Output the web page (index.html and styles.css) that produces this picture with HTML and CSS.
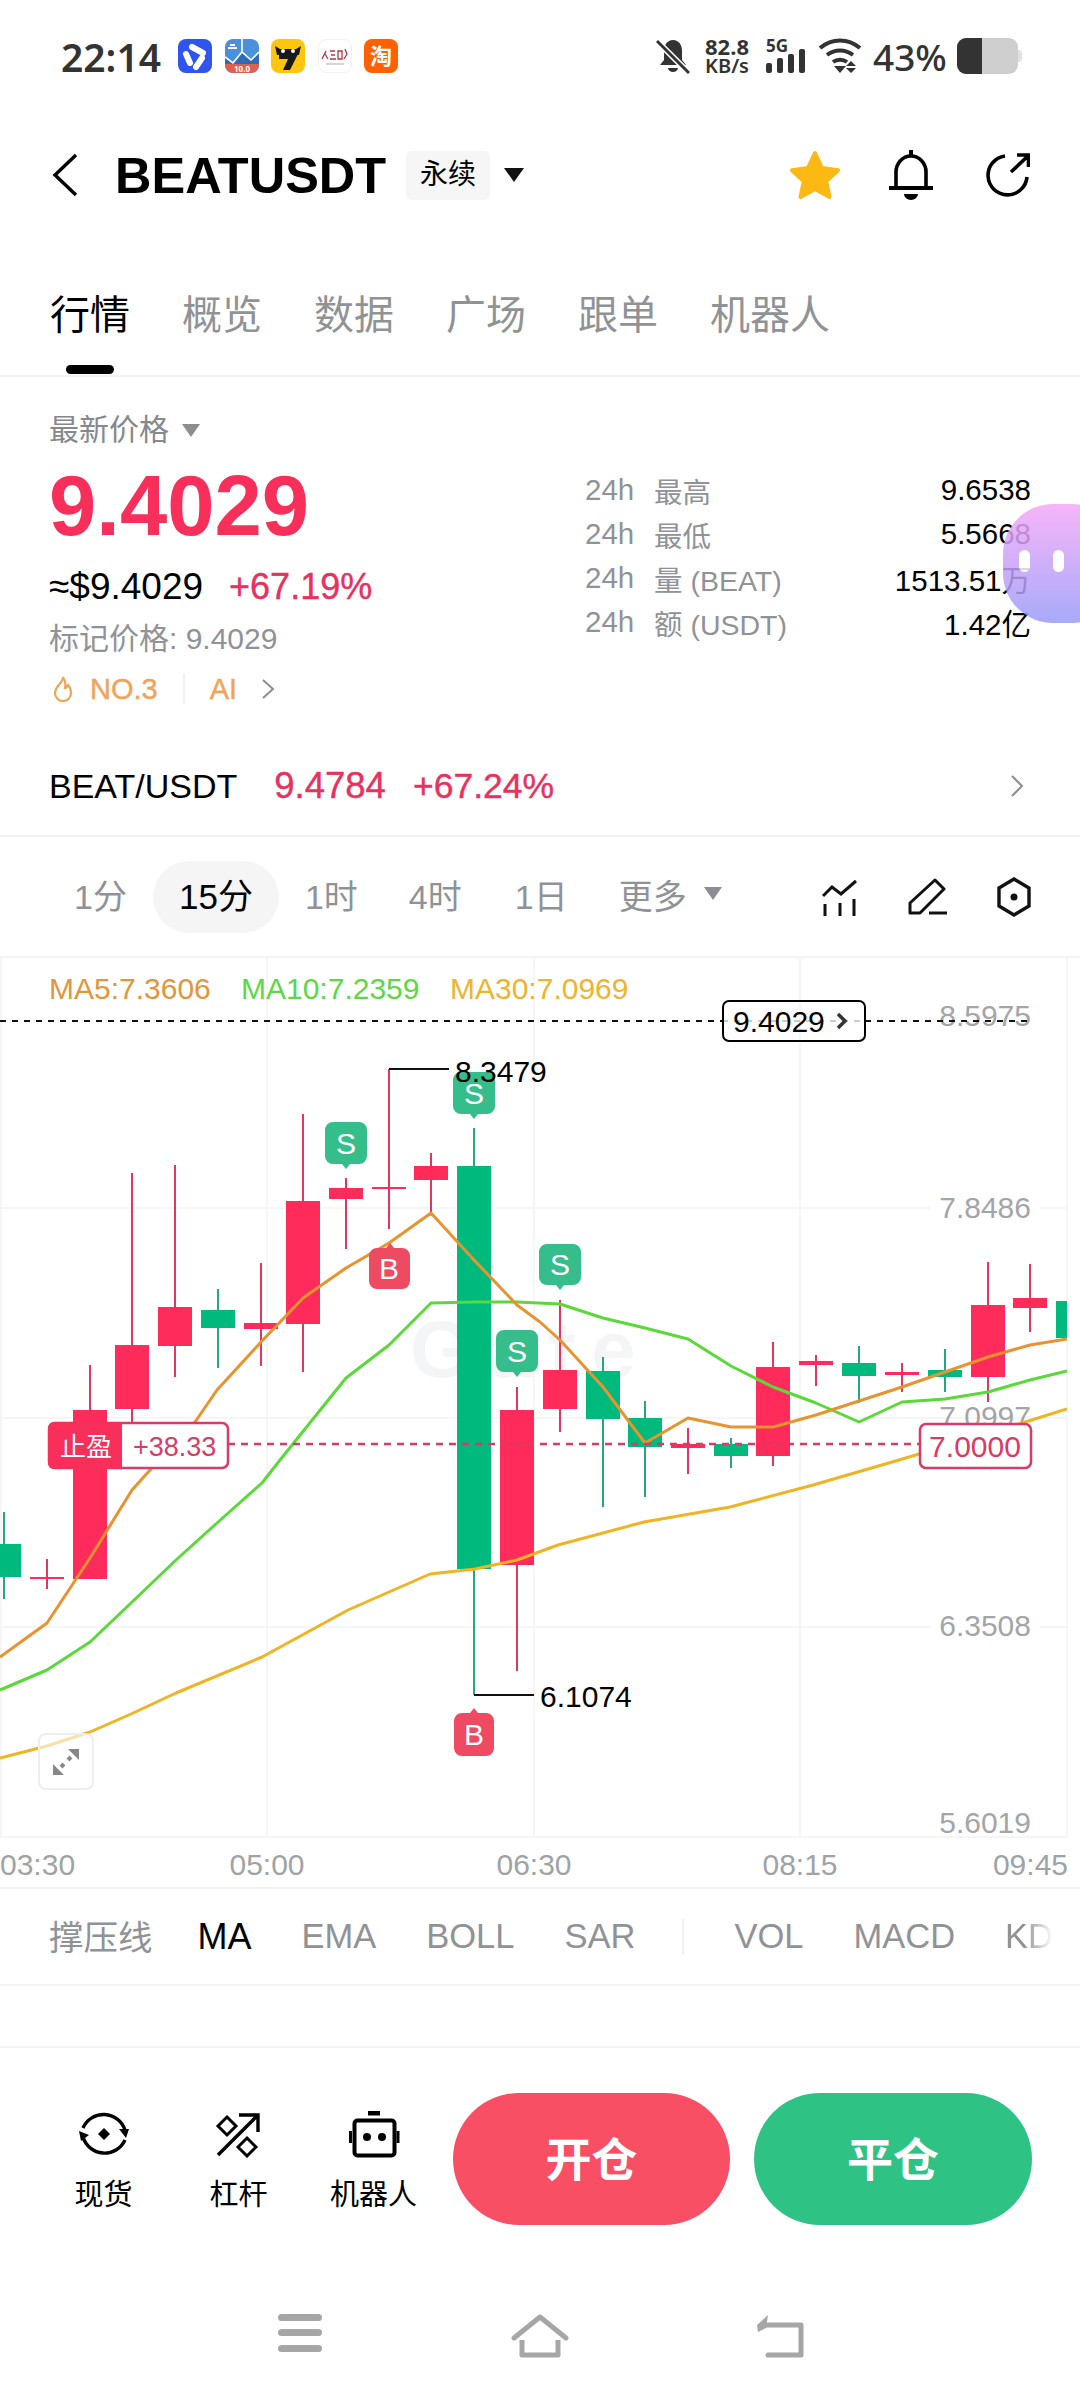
FILE: index.html
```html
<!DOCTYPE html>
<html lang="zh">
<head>
  <meta charset="UTF-8" />
  <meta name="viewport" content="width=device-width, initial-scale=1.0"/>
  <title>BEATUSDT</title>
  <link rel="stylesheet" href="styles.css">
</head>
<body>
<div class="page">

  <!-- status bar -->
  <div class="status">
    <span class="clock">22:14</span>
    <div class="apps">
      <svg class="app" viewBox="0 0 34 34"><rect width="34" height="34" rx="8" fill="#2f54f0"/><path d="M14 8l11 6M8 15l4 9M24 19l-6 9" fill="none" stroke="#fff" stroke-width="6" stroke-linecap="round"/></svg>
      <svg class="app" viewBox="0 0 34 34"><rect width="34" height="34" rx="8" fill="#4a90dc"/><path d="M0 19l8 6 9-11 9 8 8-8v12H0z" fill="#2f6cb8"/><path d="M0 18l8 6 9-11 9 8 8-8M17 0v13" fill="none" stroke="#fff" stroke-width="1.600"/><path d="M3 9h9M5 6h5" stroke="#fff" stroke-width="1.800"/><path d="M0 25h34v1a8 8 0 0 1-8 8H8a8 8 0 0 1-8-8z" fill="#e0604f"/><text x="17" y="32.500" class="app-num">10.0</text></svg>
      <svg class="app" viewBox="0 0 34 34"><rect width="34" height="34" rx="8" fill="#fdc60d"/><path d="M4 7l5 3h16l5-3-2 9H6z" fill="#1a1a1a"/><path d="M8 15h19l-8 16h-7l5-11H8z" fill="#1a1a1a"/><circle cx="12" cy="12" r="2" fill="#fff"/><circle cx="22" cy="12" r="2" fill="#fff"/></svg>
      <svg class="app" viewBox="0 0 34 34"><rect x=".5" y=".5" width="33" height="33" rx="8" fill="#fff" stroke="#f0f0f0"/><path d="M4 20l4-8M7 15l3 5M12 12h5M13 16h4M12 20h6M20 12h4v8h-4zM27 10l2 5-3 5" stroke="#b8344a" stroke-width="1.300" fill="none"/><path d="M8 25h18" stroke="#aaa" stroke-width="1"/></svg>
      <svg class="app" viewBox="0 0 34 34"><rect width="34" height="34" rx="8" fill="#ff6000"/><text x="17" y="25" class="app-tao">淘</text></svg>
    </div>
    <div class="sys">
      <svg class="sys-bell" viewBox="0 0 34 36"><path d="M17 2c-6 0-9 5-9 11v9l-4 5h26l-4-5v-9c0-6-3-11-9-11z" fill="#333"/><path d="M12 30a5 4 0 0 0 10 0z" fill="#333"/><path d="M1 3l32 32" stroke="#fff" stroke-width="6"/><path d="M1 3l32 32" stroke="#333" stroke-width="3"/></svg>
      <div class="speed"><span>82.8</span><span class="speed-unit">KB/s</span></div>
      <div class="net">
        <span>5G</span>
        <svg class="bars" viewBox="0 0 40 24"><rect x="0" y="14" width="6" height="10" rx="2"/><rect x="11" y="9" width="6" height="15" rx="2"/><rect x="22" y="5" width="6" height="19" rx="2"/><rect x="33" y="0" width="6" height="24" rx="2"/></svg>
      </div>
      <svg class="wifi" viewBox="0 0 44 36"><path d="M2 10c12-10 28-10 40 0M9 17c8-6 18-6 26 0M15 24c4-3 10-3 14 0" fill="none" stroke="#333" stroke-width="4"/><path d="M16 28h12l-6 7zM33 23l5 5H28z M28 30h10l-5 5z" fill="#333"/></svg>
      <span class="pct">43%</span>
      <div class="battery"><div class="battery-fill"></div></div>
    </div>
  </div>

  <!-- title bar -->
  <div class="titlebar">
    <svg class="back" viewBox="0 0 26 44"><path d="M24 2L3 22l21 20" fill="none" stroke="#000" stroke-width="3.400"/></svg>
    <h1>BEATUSDT</h1>
    <span class="tag">永续</span>
    <span class="tri tri-black"></span>
    <div class="title-actions">
      <svg class="star" viewBox="0 0 52 50"><path d="M26 3l7 15 16 2.200-11.800 11.200L40.500 47 26 39 11.500 47l3.300-15.600L3 20.200 19 18z" fill="#fdb913" stroke="#fdb913" stroke-width="4" stroke-linejoin="round"/></svg>
      <svg class="bell" viewBox="0 0 46 50"><path d="M8 38V22a15 16 0 0 1 30 0v16" fill="none" stroke="#000" stroke-width="3.600"/><path d="M23 0v6" stroke="#000" stroke-width="4"/><path d="M1 38h44" stroke="#000" stroke-width="4"/><path d="M16 44h14a7 6 0 0 1-14 0z" fill="#000"/></svg>
      <svg class="share" viewBox="0 0 44 44"><path d="M19 3A19.500 19.500 0 1 0 41 24" fill="none" stroke="#000" stroke-width="3.600"/><path d="M25 19L42 3M31 2h11.500v12" fill="none" stroke="#000" stroke-width="3.600"/></svg>
    </div>
  </div>

  <!-- tabs -->
  <div class="tabs">
    <span class="tab tab-on">行情</span>
    <span class="tab">概览</span>
    <span class="tab">数据</span>
    <span class="tab">广场</span>
    <span class="tab">跟单</span>
    <span class="tab">机器人</span>
    <i class="tab-mark"></i>
  </div>

  <!-- price block -->
  <div class="info">
    <div class="info-left">
      <div class="latest">最新价格 <span class="tri tri-grey"></span></div>
      <div class="price">9.4029</div>
      <div class="approx"><span>≈$9.4029</span><span class="up">+67.19%</span></div>
      <div class="mark">标记价格: 9.4029</div>
      <div class="hot">
        <svg class="fire" viewBox="0 0 22 26"><path d="M11 1c1 5-8 9-8 16a8 8 0 0 0 16 0c0-3-1-6-3-8-1 2-2 3-3 3 1-4 0-8-2-11z" fill="none" stroke="#f1a35a" stroke-width="2.200"/></svg>
        <span>NO.3</span>
        <i class="hot-sep"></i>
        <span>AI</span>
        <svg class="hot-arrow" viewBox="0 0 14 22"><path d="M2 2l10 9-10 9" fill="none" stroke="#8a8d91" stroke-width="2"/></svg>
      </div>
    </div>
    <div class="stats">
      <div class="stat"><span class="stat-h">24h</span><span class="stat-k">最高</span><b>9.6538</b></div>
      <div class="stat"><span class="stat-h">24h</span><span class="stat-k">最低</span><b>5.5668</b></div>
      <div class="stat"><span class="stat-h">24h</span><span class="stat-k">量 (BEAT)</span><b>1513.51万</b></div>
      <div class="stat"><span class="stat-h">24h</span><span class="stat-k">额 (USDT)</span><b>1.42亿</b></div>
    </div>
    <div class="ball"><i></i><i></i></div>
  </div>

  <div class="spot">
    <span>BEAT/USDT</span>
    <span class="spot-price">9.4784</span>
    <span class="spot-pct">+67.24%</span>
    <svg class="spot-arrow" viewBox="0 0 14 22"><path d="M2 1l10 10L2 21" fill="none" stroke="#8a8d91" stroke-width="2"/></svg>
  </div>

  <!-- interval row -->
  <div class="intervals">
    <span class="iv iv-1">1分</span>
    <span class="iv iv-on">15分</span>
    <span class="iv iv-2">1时</span>
    <span class="iv iv-3">4时</span>
    <span class="iv iv-4">1日</span>
    <span class="iv iv-5">更多</span>
    <span class="tri tri-grey"></span>
    <div class="tools">
      <svg class="tool-candle" viewBox="0 0 36 38"><path d="M1 18l9-9 9 7L34 3" fill="none" stroke="#111" stroke-width="3"/><path d="M3 26v12M18 25v13M32 21v17" stroke="#111" stroke-width="3"/></svg>
      <svg class="tool-pen" viewBox="0 0 40 38"><path d="M2 35V25L27 2l9 9-24 24z" fill="none" stroke="#111" stroke-width="3" stroke-linejoin="round"/><path d="M21 35h18" stroke="#111" stroke-width="3"/></svg>
      <svg class="tool-hex" viewBox="0 0 36 40"><path d="M18 2l15 9v18l-15 9-15-9V11z" fill="none" stroke="#111" stroke-width="3.400"/><circle cx="18" cy="20" r="3.500" fill="#111"/></svg>
    </div>
  </div>

  <!-- chart, coordinates are page pixels -->
  <div class="chart">
    <svg class="chart-svg" viewBox="0 958 1080 929">
      <defs><clipPath id="plot"><rect x="0" y="958" width="1067" height="880"/></clipPath></defs>

      <g class="grid">
        <path d="M0 1208H930M1040 1208H1067M0 1418H1067M0 1627H930M1040 1627H1067M0 1837H1067"/>
        <path d="M267 958V1837M534 958V1837M800 958V1837M1067 958V1837M1 958V1837"/>
      </g>

      <text x="410" y="1377" class="watermark">Gate</text>

      <text x="49" y="999" class="legend ma5">MA5:7.3606</text>
      <text x="241" y="999" class="legend ma10">MA10:7.2359</text>
      <text x="450" y="999" class="legend ma30">MA30:7.0969</text>

      <text x="1031" y="1026" class="axis">8.5975</text>
      <text x="1031" y="1218" class="axis">7.8486</text>
      <text x="1031" y="1427" class="axis">7.0997</text>
      <text x="1031" y="1636" class="axis">6.3508</text>
      <text x="1031" y="1833" class="axis">5.6019</text>

      <text x="0" y="1875" class="time">03:30</text>
      <text x="267" y="1875" class="time time-mid">05:00</text>
      <text x="534" y="1875" class="time time-mid">06:30</text>
      <text x="800" y="1875" class="time time-mid">08:15</text>
      <text x="1068" y="1875" class="time time-end">09:45</text>

      <g clip-path="url(#plot)">
        <g class="wick-g">
          <path d="M4 1512V1599M218 1289V1368M474 1128V1695M603 1357V1507M645 1401V1497M731 1438V1468M859 1346V1403M945 1349V1392"/>
        </g>
        <g class="wick-r">
          <path d="M47 1559V1589M90 1365V1410M132 1173V1425M175 1165V1377M261 1263V1366M303 1114V1372M346 1178V1249M389 1069V1229M431 1153V1213M517 1387V1671M560 1300V1432M688 1428V1474M773 1342V1466M816 1355V1386M902 1363V1392M988 1262V1402M1030 1264V1332"/>
        </g>
        <g class="body-g">
          <rect x="-13" y="1544" width="34" height="33"/>
          <rect x="201" y="1310" width="34" height="18"/>
          <rect x="457" y="1166" width="34" height="403"/>
          <rect x="586" y="1371" width="34" height="48"/>
          <rect x="628" y="1418" width="34" height="29"/>
          <rect x="714" y="1444" width="34" height="12"/>
          <rect x="842" y="1363" width="34" height="13"/>
          <rect x="928" y="1370" width="34" height="7"/>
          <rect x="1056" y="1301" width="34" height="37"/>
        </g>
        <g class="body-r">
          <rect x="30" y="1577" width="34" height="2"/>
          <rect x="73" y="1410" width="34" height="169"/>
          <rect x="115" y="1345" width="34" height="64"/>
          <rect x="158" y="1307" width="34" height="39"/>
          <rect x="244" y="1323" width="34" height="6"/>
          <rect x="286" y="1201" width="34" height="123"/>
          <rect x="329" y="1188" width="34" height="11"/>
          <rect x="372" y="1187" width="34" height="2"/>
          <rect x="414" y="1166" width="34" height="14"/>
          <rect x="500" y="1410" width="34" height="155"/>
          <rect x="543" y="1370" width="34" height="39"/>
          <rect x="671" y="1444" width="34" height="4"/>
          <rect x="756" y="1367" width="34" height="89"/>
          <rect x="799" y="1361" width="34" height="4"/>
          <rect x="885" y="1372" width="34" height="3"/>
          <rect x="971" y="1305" width="34" height="72"/>
          <rect x="1013" y="1298" width="34" height="10"/>
        </g>
        <polyline class="line ma30-line" points="0,1758 47,1746 90,1732 131,1714 176,1693 262,1657 348,1610 430,1574 475,1569 517,1560 558,1545 644,1522 730,1507 813,1485 899,1460 1022,1423 1067,1409"/>
        <polyline class="line ma10-line" points="0,1690 47,1670 90,1642 131,1603 176,1560 217,1523 262,1483 280,1460 346,1378 389,1345 431,1303 474,1302 517,1302 560,1304 603,1318 645,1328 688,1339 731,1366 773,1387 816,1403 859,1422 902,1402 945,1399 988,1392 1030,1380 1067,1371"/>
        <polyline class="line ma5-line" points="0,1657 47,1623 90,1558 132,1490 150,1470 175,1440 195,1422 217,1390 261,1342 303,1298 346,1268 389,1243 431,1213 474,1260 517,1305 540,1322 560,1340 603,1387 645,1443 688,1418 731,1427 773,1427 816,1415 859,1401 902,1387 945,1372 988,1357 1030,1345 1067,1339"/>
      </g>

      <!-- last price line -->
      <path class="dash-black" d="M0 1021H722M865 1021H1029"/>
      <path class="dash-pale" d="M722 1021H865"/>
      <rect x="723" y="1001" width="142" height="40" rx="6" class="price-tag"/>
      <text x="733" y="1032" class="tag-text">9.4029</text>
      <path d="M838 1014l7 7-7 7" class="tag-arrow"/>

      <!-- take profit line -->
      <path class="dash-red" d="M228 1444H919"/>
      <rect x="49" y="1423" width="179" height="45" rx="6" class="tp-box"/>
      <path d="M54 1422h68v47H54a6 6 0 0 1-6-6v-35a6 6 0 0 1 6-6z" class="tp-fill"/>
      <text x="86" y="1456" class="tp-label">止盈</text>
      <text x="133" y="1456" class="tp-num">+38.33</text>
      <rect x="920" y="1424" width="111" height="44" rx="6" class="tp-box"/>
      <text x="975" y="1457" class="tp-price">7.0000</text>

      <!-- trade marks -->
      <g class="mark-s">
        <path d="M333 1122h26a8 8 0 0 1 8 8v26a8 8 0 0 1-8 8h-9l-4 5-4-5h-9a8 8 0 0 1-8-8v-26a8 8 0 0 1 8-8z"/>
        <path d="M461 1072h26a8 8 0 0 1 8 8v26a8 8 0 0 1-8 8h-9l-4 5-4-5h-9a8 8 0 0 1-8-8v-26a8 8 0 0 1 8-8z"/>
        <path d="M504 1330h26a8 8 0 0 1 8 8v26a8 8 0 0 1-8 8h-9l-4 5-4-5h-9a8 8 0 0 1-8-8v-26a8 8 0 0 1 8-8z"/>
        <path d="M547 1244h26a8 8 0 0 1 8 8v25a8 8 0 0 1-8 8h-9l-4 5-4-5h-9a8 8 0 0 1-8-8v-25a8 8 0 0 1 8-8z"/>
      </g>
      <g class="mark-b">
        <path d="M377 1248h9l4-5 4 5h8a8 8 0 0 1 8 8v25a8 8 0 0 1-8 8h-25a8 8 0 0 1-8-8v-25a8 8 0 0 1 8-8z"/>
        <path d="M462 1713h8l4-5 4 5h8a8 8 0 0 1 8 8v27a8 8 0 0 1-8 8h-24a8 8 0 0 1-8-8v-27a8 8 0 0 1 8-8z"/>
      </g>
      <g class="mark-text">
        <text x="346" y="1154">S</text>
        <text x="474" y="1104">S</text>
        <text x="517" y="1362">S</text>
        <text x="560" y="1275">S</text>
        <text x="389" y="1279">B</text>
        <text x="474" y="1745">B</text>
      </g>

      <!-- high and low callouts -->
      <path class="callout" d="M389 1069H449"/>
      <text x="455" y="1082" class="callout-text">8.3479</text>
      <path class="callout" d="M474 1695H534"/>
      <text x="540" y="1707" class="callout-text">6.1074</text>
    </svg>
    <div class="expand">
      <svg viewBox="0 0 30 30"><path d="M17 2h11v11zM13 28H2V17z" fill="#85878b"/><path d="M20 10l-3 3M10 20l3-3" stroke="#85878b" stroke-width="4"/></svg>
    </div>
  </div>

  <!-- indicators -->
  <div class="indicators">
    <span class="ind ind-cn">撑压线</span>
    <span class="ind ind-on">MA</span>
    <span class="ind">EMA</span>
    <span class="ind">BOLL</span>
    <span class="ind">SAR</span>
    <i class="ind-sep"></i>
    <span class="ind">VOL</span>
    <span class="ind">MACD</span>
    <span class="ind ind-fade">KD</span>
  </div>

  <div class="blank"></div>

  <!-- bottom actions -->
  <div class="actions">
    <div class="act">
      <svg viewBox="0 0 52 50"><path d="M5 19A22.500 22.500 0 0 1 47 21M47 31A22.500 22.500 0 0 1 5 28" fill="none" stroke="#000" stroke-width="3.400"/><path d="M41 20h10l-3 9zM1 22l10 4-8 6z" fill="#000"/><path d="M26 19l6 6-6 6-6-6z" fill="#000"/></svg>
      <span>现货</span>
    </div>
    <div class="act">
      <svg viewBox="0 0 52 50"><path d="M5 46L45 6M26 6h19v17" fill="none" stroke="#000" stroke-width="3.400"/><path d="M14 8l9 9-9 9-9-9zM34 29l9 9-9 9-9-9z" fill="none" stroke="#000" stroke-width="3"/></svg>
      <span>杠杆</span>
    </div>
    <div class="act">
      <svg viewBox="0 0 52 50"><rect x="6.500" y="11.500" width="40" height="35" rx="3" fill="none" stroke="#000" stroke-width="4"/><rect x="20" y="2" width="12" height="4.500" fill="#000"/><rect x="1" y="22" width="3" height="12" fill="#000"/><rect x="48.500" y="22" width="3" height="12" fill="#000"/><circle cx="19" cy="28" r="4" fill="#000"/><circle cx="34" cy="28" r="4" fill="#000"/></svg>
      <span>机器人</span>
    </div>
    <div class="btn btn-open">开仓</div>
    <div class="btn btn-close">平仓</div>
  </div>

  <!-- system nav -->
  <div class="nav">
    <svg class="nav-menu" viewBox="0 0 44 38"><rect y="0" width="44" height="7" rx="3.500"/><rect y="15" width="44" height="7" rx="3.500"/><rect y="31" width="44" height="7" rx="3.500"/></svg>
    <svg class="nav-home" viewBox="0 0 58 44"><path d="M3 24L29 3l26 21" fill="none" stroke="#a6a6a6" stroke-width="5" stroke-linecap="round" stroke-linejoin="round"/><path d="M11 26v15h36V26" fill="none" stroke="#a6a6a6" stroke-width="5" stroke-linejoin="round"/></svg>
    <svg class="nav-back" viewBox="0 0 48 44"><path d="M6 11h39v30H12" fill="none" stroke="#a6a6a6" stroke-width="5" stroke-linejoin="round" stroke-linecap="round"/><path d="M12 1L1 11l1 7 8-4z" fill="#a6a6a6"/></svg>
  </div>

</div>
</body>
</html>
```
FILE: styles.css
```css
* {
  box-sizing: border-box;
}
body {
  margin: 0;
  background: #fff;
  font-family: "Liberation Sans", "Noto Sans CJK SC", sans-serif;
  color: #000;
}
.page {
  width: 1080px;
  height: 2400px;
  overflow: hidden;
  display: flex;
  flex-direction: column;
}

/* status bar */
.status {
  height: 112px;
  display: flex;
  align-items: center;
  padding: 0 58px 0 61px;
  font-family: "Noto Sans", sans-serif;
  color: #333;
}
.clock {
  font-size: 39px;
  font-weight: 600;
  width: 117px;
}
.apps {
  display: flex;
  gap: 12.5px;
}
.app {
  width: 34px;
  height: 34px;
}
.app-num {
  font-size: 8px;
  fill: #fff;
  text-anchor: middle;
  font-weight: 700;
}
.app-tao {
  font-family: "Noto Sans CJK SC", sans-serif;
  font-size: 22px;
  fill: #fff;
  text-anchor: middle;
  font-weight: 700;
}
.sys {
  margin-left: auto;
  display: flex;
  align-items: center;
}
.sys-bell {
  width: 34px;
  height: 36px;
}
.speed {
  margin-left: 12px;
  width: 50px;
  display: flex;
  flex-direction: column;
  align-items: center;
  font-size: 22px;
  font-weight: 700;
  line-height: 19px;
}
.speed-unit {
  font-size: 20px;
  font-weight: 600;
  line-height: 20px;
}
.net {
  margin-left: 14px;
  width: 41px;
  font-size: 17px;
  font-weight: 700;
  line-height: 13px;
}
.bars {
  display: block;
  width: 40px;
  height: 24px;
  fill: #333;
  margin-top: -3px;
}
.wifi {
  margin-left: 11px;
  width: 44px;
  height: 36px;
}
.pct {
  margin-left: 11px;
  font-size: 37px;
  font-weight: 500;
  width: 84px;
}
.battery {
  position: relative;
  width: 61px;
  height: 36px;
  border-radius: 9px;
  background: #cfcfcf;
  margin-right: 4px;
}
.battery::after {
  content: "";
  position: absolute;
  right: -4px;
  top: 12px;
  width: 4px;
  height: 12px;
  border-radius: 0 3px 3px 0;
  background: #e2e2e2;
}
.battery-fill {
  width: 25px;
  height: 100%;
  border-radius: 9px 0 0 9px;
  background: #333;
}

/* title */
.titlebar {
  height: 126px;
  display: flex;
  align-items: center;
  padding: 0 50px 0 52px;
}
.back {
  width: 26px;
  height: 44px;
}
.titlebar h1 {
  margin: 0 0 0 37px;
  font-size: 50.500px;
  font-weight: 700;
  width: 291px;
}
.tag {
  width: 84px;
  height: 49px;
  background: #f6f6f6;
  border-radius: 6px;
  font-size: 28px;
  line-height: 47px;
  text-align: center;
}
.tri {
  display: inline-block;
  width: 0;
  height: 0;
  border-left: 10px solid transparent;
  border-right: 10px solid transparent;
}
.tri-black {
  margin-left: 14px;
  border-top: 14px solid #111;
}
.tri-grey {
  border-left-width: 9px;
  border-right-width: 9px;
  border-top: 13px solid #8a8d91;
}
.title-actions {
  margin-left: auto;
  display: flex;
  align-items: center;
}
.star {
  width: 52px;
  height: 50px;
}
.bell {
  width: 46px;
  height: 50px;
  margin-left: 47px;
}
.share {
  width: 44px;
  height: 44px;
  margin-left: 52px;
}

/* tabs */
.tabs {
  position: relative;
  height: 139px;
  display: flex;
  gap: 52px;
  padding: 53px 0 0 50px;
  border-bottom: 2px solid #f3f3f3;
}
.tab {
  font-size: 40px;
  line-height: 48px;
  height: 48px;
  color: #909396;
}
.tab-on {
  color: #000;
}
.tab-mark {
  position: absolute;
  left: 66px;
  top: 127px;
  width: 48px;
  height: 9px;
  border-radius: 5px;
  background: #000;
}

/* price block */
.info {
  position: relative;
  height: 362px;
  display: flex;
  padding-left: 49px;
}
.info-left {
  width: 536px;
  padding-top: 33px;
}
.latest {
  display: flex;
  align-items: center;
  gap: 13px;
  font-size: 30px;
  line-height: 40px;
  color: #85888c;
}
.price {
  margin: 14px 0 19px;
  font-size: 85px;
  font-weight: 700;
  line-height: 84px;
  color: #f72f5a;
}
.approx {
  display: flex;
  gap: 26px;
  font-size: 37px;
  line-height: 40px;
}
.up {
  font-size: 36px;
  color: #e8315f;
  -webkit-text-stroke: 0.4px #e8315f;
}
.mark {
  margin-top: 12px;
  font-size: 30px;
  line-height: 40px;
  color: #8f9296;
}
.hot {
  margin-top: 15px;
  display: flex;
  align-items: center;
  height: 30px;
  font-size: 29px;
  color: #f1a35a;
  -webkit-text-stroke: 0.4px #f1a35a;
}
.fire {
  width: 22px;
  height: 26px;
  margin: 0 16px 0 3px;
}
.hot-sep {
  width: 2px;
  height: 30px;
  background: #f0f0f0;
  margin: 0 25px;
}
.hot-arrow {
  width: 14px;
  height: 22px;
  margin-left: 24px;
}
.stats {
  width: 446px;
  padding-top: 91px;
}
.stat {
  display: flex;
  align-items: center;
  height: 44px;
  font-size: 29.500px;
  color: #8f9296;
}
.stat-h {
  width: 69px;
}
.stat-k {
  font-size: 28.500px;
}
.stat b {
  margin-left: auto;
  font-weight: 400;
  color: #000;
}
.ball {
  position: absolute;
  right: -42px;
  top: 127px;
  width: 119px;
  height: 119px;
  border-radius: 50px;
  background: linear-gradient(#f5a8f8, #9a9cf9);
  opacity: 0.85;
}
.ball i {
  position: absolute;
  top: 46px;
  width: 11px;
  height: 22px;
  border-radius: 6px;
  background: #fff;
}
.ball i:first-child {
  left: 16px;
}
.ball i:last-child {
  left: 50px;
}

/* spot link */
.spot {
  height: 98px;
  display: flex;
  align-items: center;
  padding: 0 56px 2px 49px;
  border-bottom: 2px solid #f3f3f3;
  font-size: 34px;
}
.spot-price {
  margin-left: 37px;
  font-size: 36.500px;
  color: #e8315f;
  -webkit-text-stroke: 0.4px #e8315f;
}
.spot-pct {
  margin-left: 27px;
  font-size: 35.500px;
  color: #e8315f;
  -webkit-text-stroke: 0.4px #e8315f;
}
.spot-arrow {
  margin-left: auto;
  width: 14px;
  height: 22px;
}

/* intervals */
.intervals {
  position: relative;
  height: 121px;
  display: flex;
  align-items: center;
  border-bottom: 2px solid #f3f3f3;
  font-size: 34px;
  color: #8f9296;
}
.iv {
  line-height: 72px;
}
.iv-1 {
  margin-left: 74px;
}
.iv-on {
  margin-left: 26px;
  width: 126px;
  height: 72px;
  text-align: center;
  border-radius: 36px;
  background: #f5f5f5;
  color: #000;
  font-size: 35px;
}
.iv-2 {
  margin-left: 26px;
}
.iv-3 {
  margin-left: 51px;
}
.iv-4 {
  margin-left: 53px;
}
.iv-5 {
  margin-left: 51px;
}
.intervals .tri {
  margin: 0 0 6px 17px;
}
.tools {
  margin-left: auto;
  margin-right: 48px;
  display: flex;
  align-items: center;
}
.tool-candle {
  width: 36px;
  height: 38px;
}
.tool-pen {
  width: 40px;
  height: 38px;
  margin-left: 50px;
}
.tool-hex {
  width: 36px;
  height: 40px;
  margin-left: 48px;
}

/* chart */
.chart {
  position: relative;
  height: 931px;
  border-bottom: 2px solid #f1f1f1;
}
.chart-svg {
  position: absolute;
  left: 0;
  top: 0;
  width: 1080px;
  height: 929px;
  font-family: "Liberation Sans", "Noto Sans CJK SC", sans-serif;
}
.grid path {
  fill: none;
  stroke: #f5f6f6;
  stroke-width: 2;
}
.watermark {
  font-size: 80px;
  font-weight: 700;
  letter-spacing: 16px;
  fill: #f4f5f6;
}
.legend {
  font-size: 30px;
}
.ma5 {
  fill: #e39539;
}
.ma10 {
  fill: #5bd844;
}
.ma30 {
  fill: #efb32c;
}
.axis {
  font-size: 30px;
  fill: #a3a5a8;
  text-anchor: end;
}
.time {
  font-size: 30px;
  fill: #a0a3a6;
}
.time-mid {
  text-anchor: middle;
}
.time-end {
  text-anchor: end;
}
.wick-g path {
  fill: none;
  stroke: #2aa584;
  stroke-width: 2;
}
.wick-r path {
  fill: none;
  stroke: #e0365f;
  stroke-width: 2;
}
.body-g rect {
  fill: #00b97c;
}
.body-r rect {
  fill: #ff2b5a;
}
.line {
  fill: none;
  stroke-width: 3;
  stroke-linejoin: round;
}
.ma5-line {
  stroke: #e8932f;
}
.ma10-line {
  stroke: #5bd83a;
}
.ma30-line {
  stroke: #efb324;
}
.dash-black {
  fill: none;
  stroke: #111;
  stroke-width: 2;
  stroke-dasharray: 6 6;
}
.dash-pale {
  fill: none;
  stroke: #ccc;
  stroke-width: 2;
  stroke-dasharray: 6 6;
}
.price-tag {
  fill: none;
  stroke: #000;
  stroke-width: 2;
}
.tag-text {
  font-size: 30px;
  fill: #000;
}
.tag-arrow {
  fill: none;
  stroke: #333;
  stroke-width: 3.500;
}
.dash-red {
  fill: none;
  stroke: #d93a66;
  stroke-width: 2.500;
  stroke-dasharray: 7 6;
}
.tp-box {
  fill: #fff;
  stroke: #d93a66;
  stroke-width: 2.500;
}
.tp-fill {
  fill: #f72f5a;
}
.tp-label {
  font-size: 26px;
  fill: #fff;
  text-anchor: middle;
}
.tp-num {
  font-size: 27px;
  fill: #d93a66;
}
.tp-price {
  font-size: 30px;
  fill: #d93a66;
  text-anchor: middle;
}
.callout {
  fill: none;
  stroke: #111;
  stroke-width: 2;
}
.callout-text {
  font-size: 30px;
  fill: #000;
}
.mark-s path {
  fill: #35be8b;
}
.mark-b path {
  fill: #ee4a62;
}
.mark-text text {
  font-size: 30px;
  fill: #fff;
  text-anchor: middle;
}
.expand {
  position: absolute;
  left: 38px;
  top: 775px;
  width: 56px;
  height: 57px;
  display: flex;
  align-items: center;
  justify-content: center;
  border: 2px solid #eeeeee;
  border-radius: 8px;
  background: rgba(255, 255, 255, 0.6);
}
.expand svg {
  width: 30px;
  height: 30px;
}

/* indicators */
.indicators {
  height: 97px;
  display: flex;
  align-items: center;
  gap: 50px;
  padding-left: 49px;
  border-bottom: 2px solid #f3f3f3;
  font-size: 34.500px;
  color: #8f9296;
  white-space: nowrap;
  overflow: hidden;
}
.ind-cn {
  margin: 0 -5px 4px 0;
}
.ind-on {
  font-size: 36px;
  color: #000;
}
.ind-sep {
  width: 2px;
  height: 36px;
  margin-left: -3px;
  background: #f0f0f0;
}
.ind-fade {
  -webkit-mask-image: linear-gradient(90deg, #000 40%, transparent);
  mask-image: linear-gradient(90deg, #000 40%, transparent);
}
.blank {
  height: 62px;
  border-bottom: 2px solid #f3f3f3;
}

/* bottom actions */
.actions {
  height: 221px;
  display: flex;
  align-items: flex-start;
  padding: 45px 0 0 36px;
}
.act {
  width: 135px;
  height: 132px;
  display: flex;
  flex-direction: column;
  align-items: center;
  gap: 18px;
  font-size: 29px;
  padding-top: 16px;
  line-height: 36px;
}
.act svg {
  width: 52px;
  height: 50px;
}
.btn {
  width: 277px;
  height: 132px;
  border-radius: 66px;
  font-size: 46px;
  font-weight: 700;
  line-height: 134px;
  text-align: center;
  color: #fff;
}
.btn-open {
  margin-left: 12px;
  background: #f94f64;
}
.btn-close {
  margin-left: 24px;
  width: 278px;
  background: #2ec385;
}

/* system nav */
.nav {
  position: relative;
  height: 130px;
}
.nav svg {
  position: absolute;
  top: 45px;
}
.nav-menu {
  left: 278px;
  width: 44px;
  height: 38px;
  fill: #a6a6a6;
}
.nav-home {
  left: 511px;
  width: 58px;
  height: 44px;
}
.nav-back {
  left: 756px;
  width: 48px;
  height: 44px;
}
```
